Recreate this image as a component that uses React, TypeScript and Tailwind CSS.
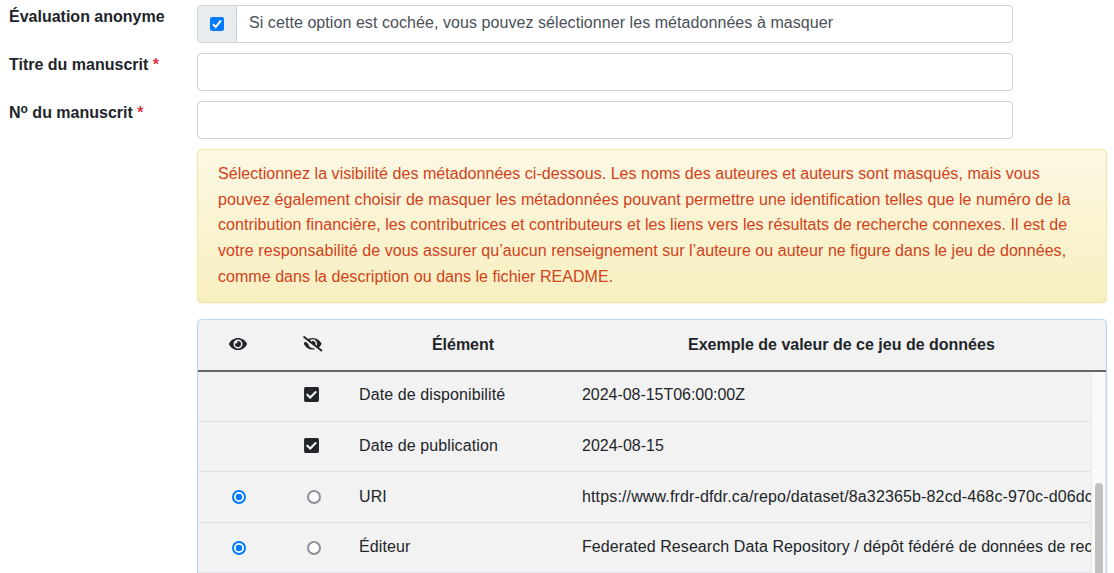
import type { ReactNode } from "react";
import { FaCheckSquare, FaEye, FaEyeSlash } from "react-icons/fa";

function Field({ label, children }: { label: ReactNode; children: ReactNode }) {
  return (
    <div className="flex h-[38px]">
      <div className="w-[188px] shrink-0 font-bold leading-6">{label}</div>
      {children}
    </div>
  );
}

const required = <span className="text-[#dc3545]">*</span>;
const inputClass = "h-[38px] w-[816px] rounded border border-[#ced4da] bg-white px-3 outline-none";

const notice = [
  { text: "Sélectionnez la visibilité des métadonnées ci-dessous. Les noms des auteures et auteurs sont masqués, mais vous", tracking: "tracking-[0.04px]" },
  { text: "pouvez également choisir de masquer les métadonnées pouvant permettre une identification telles que le numéro de la", tracking: "tracking-[0.08px]" },
  { text: "contribution financière, les contributrices et contributeurs et les liens vers les résultats de recherche connexes. Il est de", tracking: "tracking-[0.07px]" },
  { text: "votre responsabilité de vous assurer qu’aucun renseignement sur l’auteure ou auteur ne figure dans le jeu de données,", tracking: "tracking-[0.05px]" },
  { text: "comme dans la description ou dans le fichier README.", tracking: "tracking-[0.04px]" },
];

const rows = [
  { name: "Date de disponibilité", value: "2024-08-15T06:00:00Z", fixed: true, size: "h-[50px] pt-[11px]", tracking: "tracking-[-0.04px]", radio: "" },
  { name: "Date de publication", value: "2024-08-15", fixed: true, size: "h-[50px] pt-[12px]", tracking: "", radio: "" },
  { name: "URI", value: "https://www.frdr-dfdr.ca/repo/dataset/8a32365b-82cd-468c-970c-d06dc", fixed: false, size: "h-[51px] pt-[13px]", tracking: "tracking-[0.14px]", radio: "" },
  { name: "Éditeur", value: "Federated Research Data Repository / dépôt fédéré de données de rec", fixed: false, size: "h-[50px] pt-[12px]", tracking: "tracking-[0.08px]", radio: "pt-[2px]" },
];

function Radio({ on }: { on: boolean }) {
  return (
    <svg width="14" height="14" viewBox="0 0 14 14">
      <circle cx="7" cy="7" r="6" fill="white" stroke={on ? "#007aff" : "#8f8f9d"} strokeWidth="2" />
      {on && <circle cx="7" cy="7" r="3.2" fill="#007aff" />}
    </svg>
  );
}

export default function App() {
  return (
    <div className="h-[573px] overflow-hidden bg-white pl-[9px] pt-[5px] font-['Liberation_Sans',Arial,sans-serif] text-base text-[#212529]">
      <div className="flex flex-col gap-[10px]">
        <Field label="Évaluation anonyme">
          <div className="flex h-[38px] w-[816px] overflow-hidden rounded border border-[#ced4da]">
            <div className="flex w-[39px] shrink-0 items-center justify-center border-r border-[#ced4da] bg-[#e9ecef]">
              <svg width="14" height="14" viewBox="0 0 14 14">
                <rect width="14" height="14" rx="2" fill="#007aff" />
                <path d="M3 7.3 5.7 10 11 3.3" fill="none" stroke="white" strokeWidth="2" />
              </svg>
            </div>
            <div className="whitespace-nowrap pl-3 pt-[5px] leading-6 tracking-[0.065px] text-[#495057]">
              <span>Si cette option est cochée, vous pouvez sélectionner les métadonnées à masquer</span>
            </div>
          </div>
        </Field>
        <Field label={<>Titre du manuscrit {required}</>}>
          <input className={inputClass} />
        </Field>
        <Field label={<>N<sup className="top-[-5px] text-[12px] leading-none">o</sup> du manuscrit {required}</>}>
          <input className={inputClass} />
        </Field>
      </div>

      <div className="ml-[188px] mt-[10px] h-[154px] w-[910px] rounded border border-[#f5e79e] bg-linear-to-b from-[#fcf8e3] to-[#f8efc0] pl-5 pt-[11px] text-[#d2411a] shadow-[0_1px_2px_rgba(0,0,0,0.05)]">
        {notice.map((line) => (
          <div key={line.text} className="h-[25.7px] whitespace-nowrap leading-[25.7px]">
            <span className={line.tracking}>{line.text}</span>
          </div>
        ))}
      </div>

      <div className="ml-[188px] mt-4 h-[270px] w-[910px] overflow-hidden rounded-t border border-[#b9d7f5] bg-[#f2f2f2]">
        <div className="flex h-[52px] items-center border-b-2 border-[#666] font-bold">
          <div className="flex w-[79px] justify-center pb-[2px]"><FaEye size={18} /></div>
          <div className="flex w-[73px] justify-center pb-[2px] pr-px"><FaEyeSlash size={19.5} /></div>
          <div className="w-[226px] text-center"><span>Élément</span></div>
          <div className="w-[530px] pl-[112px]"><span>Exemple de valeur de ce jeu de données</span></div>
        </div>
        <div className="flex">
          <div className="w-[893px] overflow-hidden">
            {rows.map((row) => (
              <div key={row.name} className={`${row.size} box-border flex items-start border-b border-[#dee2e6] leading-6`}>
                <div className={`${row.radio} flex h-6 w-[82px] items-center justify-center`}>{!row.fixed && <Radio on />}</div>
                <div className={`${row.radio} flex h-6 w-[79px] shrink-0 items-center pl-[23px]`}>
                  {row.fixed ? <span className="pb-[2px]"><FaCheckSquare size={17} /></span> : <span className="pl-1"><Radio on={false} /></span>}
                </div>
                <div className="w-[223px] shrink-0 tracking-[0.1px]"><span>{row.name}</span></div>
                <div className="min-w-0 flex-1 overflow-hidden whitespace-nowrap"><span className={row.tracking}>{row.value}</span></div>
              </div>
            ))}
          </div>
          <div className="h-[220px] w-[15px] border-x border-[#e8e8e8] bg-[#fafafa] pl-[3px] pt-[111px]">
            <div className="h-[130px] w-2 rounded-full bg-[#c1c1c1]" />
          </div>
        </div>
      </div>
    </div>
  );
}
